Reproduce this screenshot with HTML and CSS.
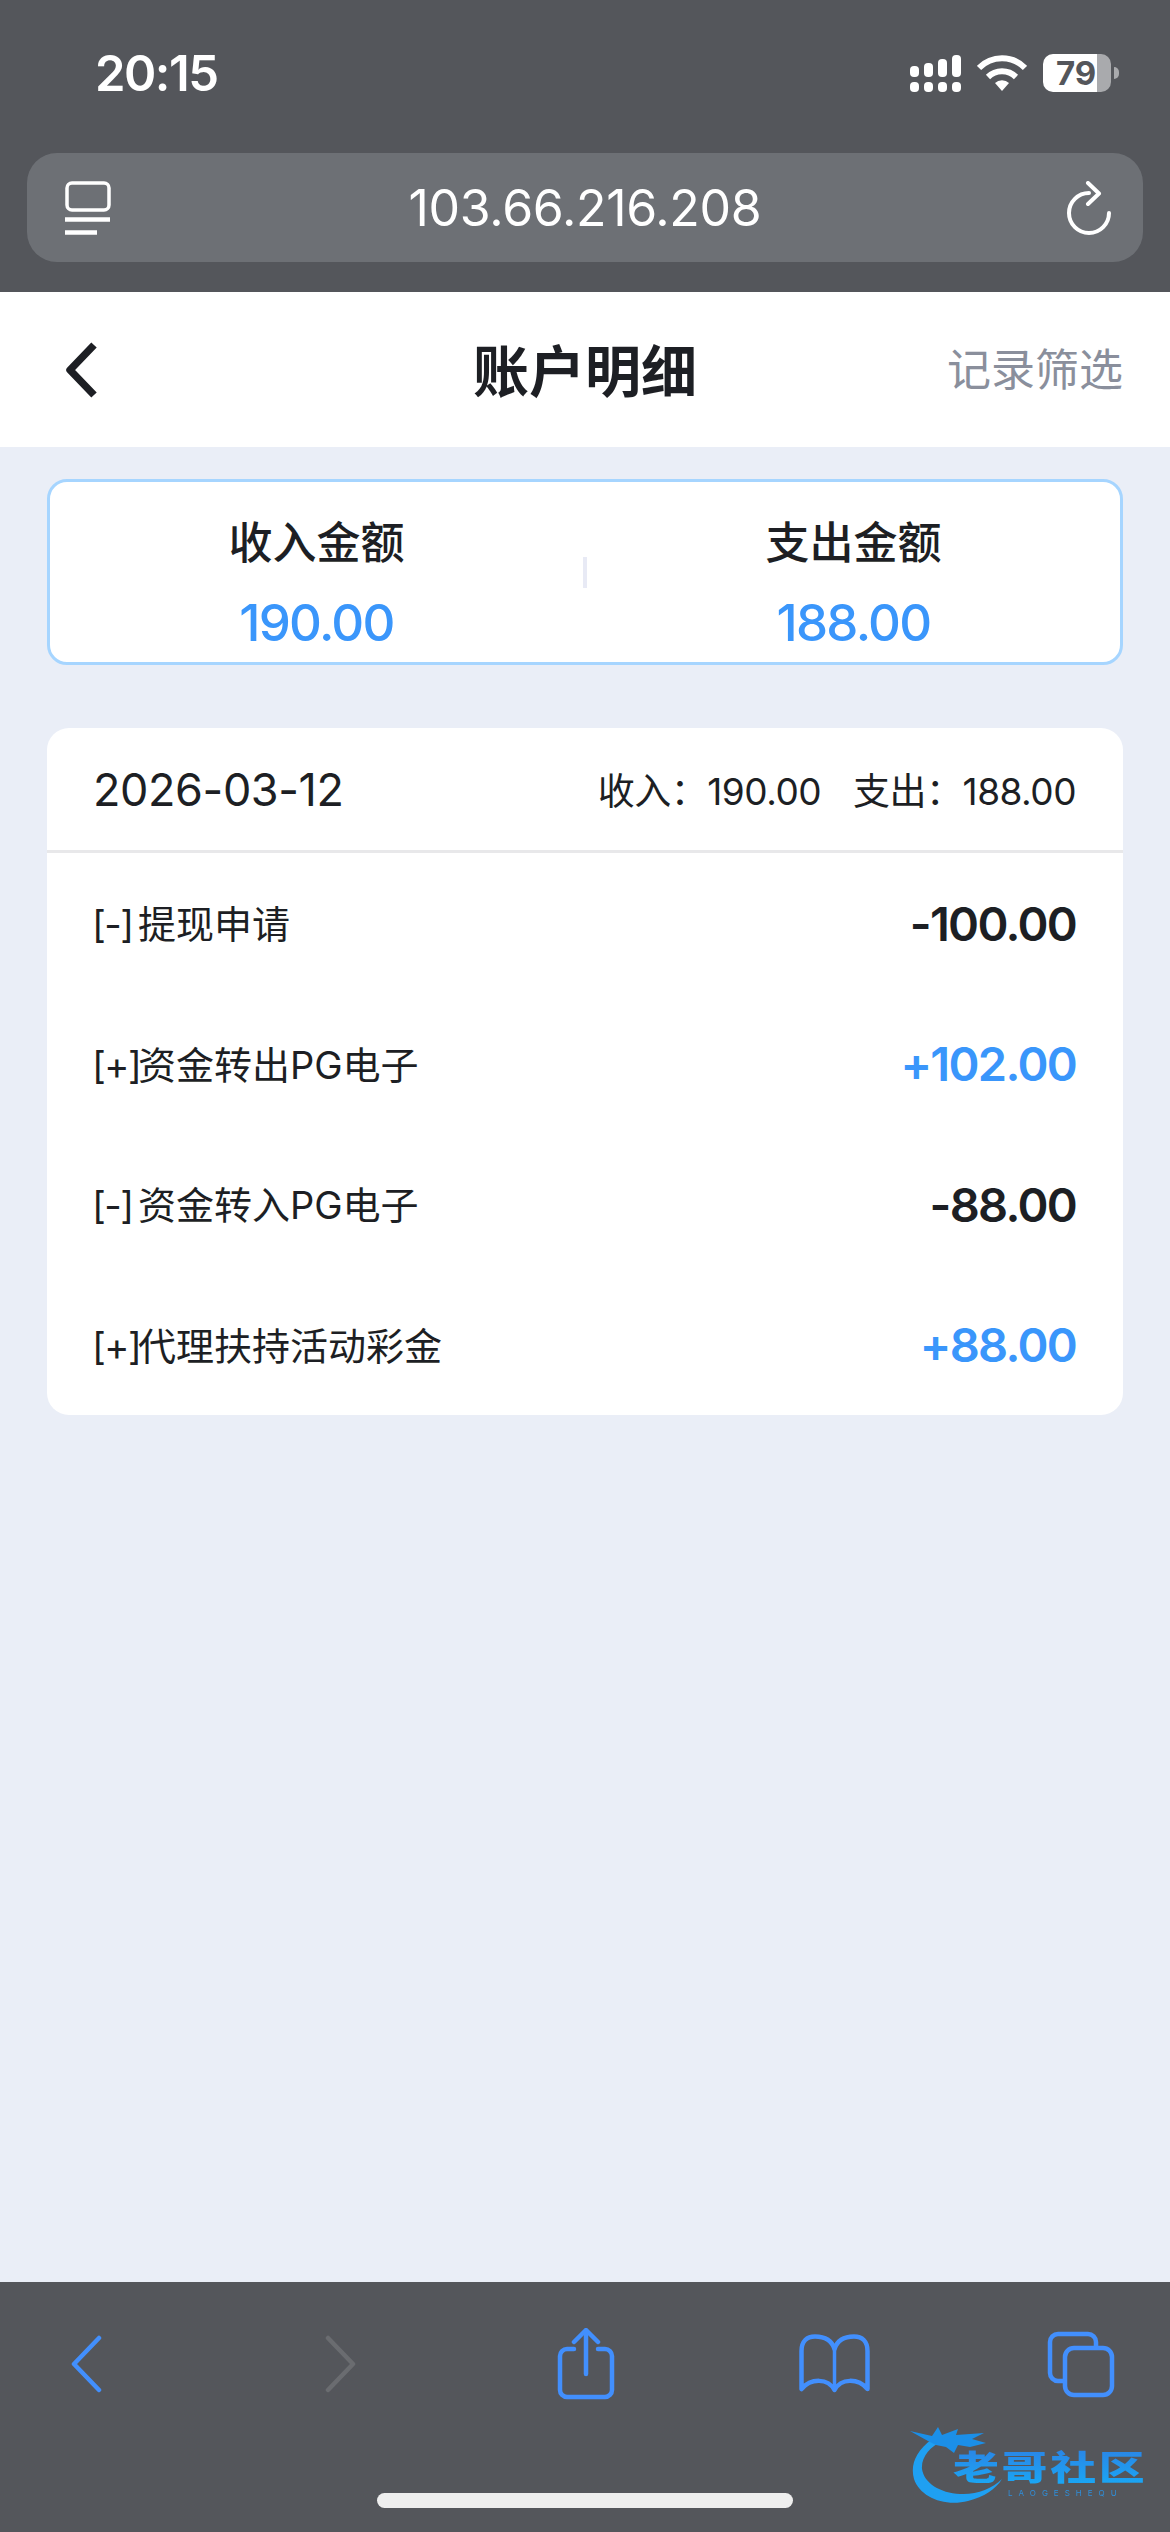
FILE: index.html
```html
<!DOCTYPE html>
<html lang="zh-CN">
<head>
    <meta charset="UTF-8">
    <meta name="viewport" content="width=device-width, initial-scale=1.0">
    <title>账户明细</title>
    <link rel="stylesheet" href="styles.css">
</head>
<body>

<div class="phone">
    <!-- browser chrome, top -->
    <div class="browser-top">
        <div class="status-bar">
            <span class="clock">20:15</span>
            <div class="status-icons">
                <svg class="icon-signal" width="51" height="37" viewBox="0 0 51 37" fill="#fff">
                    <rect x="0" y="11" width="9" height="11" rx="4"/>
                    <rect x="14" y="8" width="9" height="14" rx="4"/>
                    <rect x="28" y="4" width="9" height="18" rx="4"/>
                    <rect x="42" y="0" width="9" height="22" rx="4"/>
                    <rect x="0" y="27" width="9" height="10" rx="4"/>
                    <rect x="14" y="27" width="9" height="10" rx="4"/>
                    <rect x="28" y="27" width="9" height="10" rx="4"/>
                    <rect x="42" y="27" width="9" height="10" rx="4"/>
                </svg>
                <svg class="icon-wifi" width="50" height="36" viewBox="0 0 50 36" fill="none" stroke="#fff" stroke-width="6">
                    <path d="M2 13 A32 32 0 0 1 48 13"/>
                    <path d="M11 22 A20 20 0 0 1 39 22"/>
                    <path d="M18 28 L25 36 L32 28 A10 10 0 0 0 18 28 Z" fill="#fff" stroke="none"/>
                </svg>
                <div class="battery"><span>79</span></div>
            </div>
        </div>
        <div class="address-bar">
            <svg width="46" height="54" viewBox="0 0 46 54" fill="none" stroke="#fff" stroke-width="3.5">
                <rect x="2" y="2" width="42" height="27" rx="5"/>
                <path d="M0 38.5 H45" stroke-width="4.5"/>
                <path d="M0 51.5 H32" stroke-width="4.5"/>
            </svg>
            <span class="url">103.66.216.208</span>
            <svg class="reload" width="44" height="54" viewBox="0 0 44 54" fill="none" stroke="#fff" stroke-width="4" stroke-linecap="round" stroke-linejoin="round">
                <path d="M42 32 A20 20 0 1 1 22 12"/>
                <path d="M21 2 L32 12.5 L21 23"/>
            </svg>
        </div>
    </div>

    <!-- page -->
    <div class="page-header">
        <svg class="header-back" width="32" height="56" viewBox="0 0 32 56" fill="none" stroke="#1d1f24" stroke-width="7.5" stroke-linejoin="round">
            <path d="M29 3 L5 28 L29 53"/>
        </svg>
        <h1>账户明细</h1>
        <a class="filter-link">记录筛选</a>
    </div>

    <div class="page-body">
        <div class="summary">
            <div class="summary-item">
                <div class="summary-label">收入金额</div>
                <div class="summary-value">190.00</div>
            </div>
            <div class="summary-line"></div>
            <div class="summary-item">
                <div class="summary-label">支出金额</div>
                <div class="summary-value">188.00</div>
            </div>
        </div>

        <div class="record-card">
            <div class="record-head">
                <span class="record-date">2026-03-12</span>
                <div class="record-totals">
                    <span>收入：190.00</span>
                    <span>支出：188.00</span>
                </div>
            </div>
            <div class="record-row">
                <span class="record-name"><span class="record-sign">[-]</span>提现申请</span>
                <span class="record-amount">-100.00</span>
            </div>
            <div class="record-row">
                <span class="record-name"><span class="record-sign">[+]</span>资金转出PG电子</span>
                <span class="record-amount plus">+102.00</span>
            </div>
            <div class="record-row">
                <span class="record-name"><span class="record-sign">[-]</span>资金转入PG电子</span>
                <span class="record-amount">-88.00</span>
            </div>
            <div class="record-row">
                <span class="record-name"><span class="record-sign">[+]</span>代理扶持活动彩金</span>
                <span class="record-amount plus">+88.00</span>
            </div>
        </div>
    </div>

    <!-- browser chrome, bottom -->
    <div class="browser-bottom">
        <div class="toolbar">
            <svg class="tool-back" width="34" height="58" viewBox="0 0 34 58" fill="none" stroke="#428ffd" stroke-width="4.5" stroke-linecap="round" stroke-linejoin="round">
                <path d="M30 3 L5 29 L30 55"/>
            </svg>
            <svg class="tool-forward" width="34" height="58" viewBox="0 0 34 58" fill="none" stroke="#6a6c70" stroke-width="4.5" stroke-linecap="round" stroke-linejoin="round">
                <path d="M4 3 L29 29 L4 55"/>
            </svg>
            <svg class="tool-share" width="58" height="72" viewBox="0 0 58 72" fill="none" stroke="#428ffd" stroke-width="4.5" stroke-linecap="round" stroke-linejoin="round">
                <path d="M17 21 H10 a7 7 0 0 0 -7 7 V62 a7 7 0 0 0 7 7 H48 a7 7 0 0 0 7 -7 V28 a7 7 0 0 0 -7 -7 H41"/>
                <path d="M29 46 V3"/>
                <path d="M17 14 L29 2 L41 14"/>
            </svg>
            <svg class="tool-book" width="71" height="60" viewBox="0 0 71 60" fill="none" stroke="#428ffd" stroke-width="4.5" stroke-linejoin="round">
                <path d="M35.5 56 C29 44 12 44 2.5 55 V17 C2.5 7 8 2.5 16 2.5 C26 2.5 33 7 35.5 15 C38 7 45 2.5 55 2.5 C63 2.5 68.5 7 68.5 17 V55 C59 44 42 44 35.5 56 Z"/>
                <path d="M35.5 15 V56" stroke-width="3.5"/>
            </svg>
            <svg class="tool-tabs" width="68" height="67" viewBox="0 0 68 67" fill="none" stroke="#428ffd" stroke-width="4.5">
                <path d="M49 15 V11 a8 8 0 0 0 -8 -8 H11 a8 8 0 0 0 -8 8 V42 a8 8 0 0 0 8 8 H16"/>
                <rect x="18" y="17" width="47" height="47" rx="9"/>
            </svg>
        </div>
        <div class="home-bar"></div>
        <div class="watermark">
            <svg class="watermark-dragon" width="100" height="82" viewBox="0 0 100 82">
                <path d="M22 16 C6 28 0 42 4 56 C10 74 34 84 58 78 C74 74 86 66 92 56 C82 66 66 72 50 71 C30 70 14 60 12 46 C11 34 20 24 32 18 Z" fill="#1fa0f2"/>
                <path d="M0 8 L22 13 L28 4 L32 12 L48 6 L46 12 L74 10 L62 16 L76 20 L60 24 L48 22 L44 30 L36 24 L26 22 L18 18 Z" fill="#1b8fe8"/>
            </svg>
            <div class="watermark-name">老哥社区</div>
            <div class="watermark-sub">LAOGESHEQU</div>
        </div>
    </div>
</div>

</body>
</html>
```

FILE: styles.css
```css
* {
    box-sizing: border-box;
}

body {
    margin: 0;
    background: #eaeef7;
    font-family: Inter, "Noto Sans CJK SC", sans-serif;
    color: #1d1f24;
}

.phone {
    width: 1170px;
    height: 2532px;
    display: flex;
    flex-direction: column;
    overflow: hidden;
}

/* top chrome */
.browser-top {
    height: 292px;
    background: #54565b;
    color: #fff;
}

.status-bar {
    height: 153px;
    padding: 0 59px 7px 95px;
    display: flex;
    align-items: center;
    justify-content: space-between;
}

.clock {
    font-size: 49px;
    font-weight: 600;
    letter-spacing: -1.5px;
}

.status-icons {
    display: flex;
    align-items: center;
    gap: 16px;
}

.battery {
    position: relative;
    width: 68px;
    height: 38px;
    border-radius: 10px;
    padding-left: 13px;
    background: linear-gradient(90deg, #fff 54px, #a9aaad 54px);
    color: #54565b;
    font-size: 33px;
    font-weight: 700;
    line-height: 38px;
}

.battery::after {
    content: "";
    position: absolute;
    right: -8px;
    top: 13px;
    width: 5px;
    height: 12px;
    border-radius: 0 5px 5px 0;
    background: #a9aaad;
}

.address-bar {
    height: 109px;
    margin: 0 27px;
    padding: 0 32px 0 38px;
    border-radius: 30px;
    background: #6d7075;
    display: grid;
    grid-template-columns: 1fr auto 1fr;
    align-items: center;
}

.url {
    margin-left: -6px;
    font-size: 50px;
    letter-spacing: -0.3px;
}

.reload {
    justify-self: end;
}

/* page */
.page-header {
    position: relative;
    height: 155px;
    padding-bottom: 5px;
    background: #fff;
    display: flex;
    align-items: center;
    justify-content: center;
}

.header-back {
    position: absolute;
    left: 65px;
    top: 50px;
}

h1 {
    margin: 0;
    font-size: 56px;
    font-weight: 700;
}

.filter-link {
    position: absolute;
    right: 47px;
    font-size: 44px;
    color: #8a8f9c;
}

.page-body {
    flex: 1;
    padding: 32px 47px 0;
}

.summary {
    height: 186px;
    background: #fff;
    border: 3px solid #a6d5ff;
    border-radius: 20px;
    display: flex;
    align-items: center;
}

.summary-item {
    flex: 1;
    padding-top: 22px;
    text-align: center;
}

.summary-label {
    font-size: 44px;
    font-weight: 500;
    line-height: 60px;
}

.summary-value {
    margin-top: 20px;
    font-size: 51px;
    font-weight: 500;
    line-height: 60px;
    letter-spacing: -1.7px;
    color: #3a96fb;
}

.summary-line {
    width: 4px;
    height: 31px;
    background: #e8eaf5;
}

.record-card {
    margin-top: 63px;
    background: #fff;
    border-radius: 22px;
    overflow: hidden;
}

.record-head {
    height: 125px;
    padding: 0 47px 0 46px;
    border-bottom: 3px solid #e8e8ea;
    display: flex;
    align-items: center;
    justify-content: space-between;
}

.record-date {
    font-size: 45px;
    letter-spacing: -0.4px;
}

.record-totals {
    display: flex;
    gap: 32px;
    font-size: 37px;
    letter-spacing: -0.5px;
}

.record-row {
    height: 140.5px;
    padding: 0 47px 0 45px;
    display: flex;
    align-items: center;
    justify-content: space-between;
}

.record-name {
    margin-bottom: 3px;
    font-size: 38px;
}

.record-sign {
    display: inline-block;
    width: 46px;
    letter-spacing: -1.5px;
}

.record-amount {
    font-size: 47px;
    font-weight: 600;
    letter-spacing: -1.7px;
}

.record-amount.plus {
    color: #3a96fb;
}

/* bottom chrome */
.browser-bottom {
    position: relative;
    height: 250px;
    background: #54565b;
    display: flex;
    flex-direction: column;
    align-items: center;
}

.toolbar {
    width: 1170px;
    height: 211px;
    padding-bottom: 47px;
    display: flex;
    align-items: center;
}

.tool-back {
    margin-left: 69px;
}

.tool-forward {
    margin-left: 221px;
}

.tool-share {
    margin-left: 199px;
}

.tool-book {
    margin-left: 184px;
}

.tool-tabs {
    margin-left: 177px;
}

.home-bar {
    width: 416px;
    height: 15px;
    border-radius: 8px;
    background: #eee;
}

.watermark {
    position: absolute;
    left: 910px;
    top: 141px;
    width: 250px;
    height: 82px;
    filter: blur(0.6px);
}

.watermark-dragon {
    position: absolute;
    left: 0;
    top: 0;
}

.watermark-name {
    position: absolute;
    left: 43px;
    top: 27px;
    font-size: 34px;
    font-weight: 900;
    line-height: 36px;
    letter-spacing: 2px;
    white-space: nowrap;
    transform: scaleX(1.35);
    transform-origin: left center;
    background: linear-gradient(#2a86e6, #19a8f5);
    -webkit-background-clip: text;
    background-clip: text;
    color: transparent;
}

.watermark-sub {
    position: absolute;
    left: 98px;
    top: 66px;
    font-size: 8px;
    line-height: 9px;
    letter-spacing: 6px;
    color: #2e8fdc;
    white-space: nowrap;
}
```
